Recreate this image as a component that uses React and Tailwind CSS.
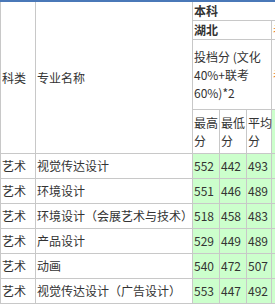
const rows = [
  ['艺术', '视觉传达设计', 552, 442, 493],
  ['艺术', '环境设计', 551, 446, 489],
  ['艺术', '环境设计（会展艺术与技术）', 518, 458, 483],
  ['艺术', '产品设计', 529, 449, 489],
  ['艺术', '动画', 540, 472, 507],
  ['艺术', '视觉传达设计（广告设计）', 553, 447, 492],
];

const cell = 'border border-[#c8c8c8] px-px py-0 align-middle text-left';

export default function App() {
  return (
    <div className="w-[275px] h-[305px] overflow-hidden bg-white">
      <table
        className="w-[331px] table-fixed border-collapse border-t-2 border-t-[#4a78b8] text-[12px] leading-[18px] text-[#333]"
        style={{ fontFamily: '"Microsoft YaHei", "Noto Sans CJK SC", sans-serif' }}
      >
        <colgroup>
          <col className="w-[35px]" />
          <col className="w-[157px]" />
          <col className="w-[27px]" />
          <col className="w-[27px]" />
          <col className="w-[25px]" />
          <col className="w-[60px]" />
        </colgroup>
        <thead>
          <tr className="h-[19px]">
            <th rowSpan={4} className={cell + ' font-normal whitespace-nowrap'}>科类</th>
            <th rowSpan={4} className={cell + ' font-normal whitespace-nowrap'}>专业名称</th>
            <th colSpan={4} className={cell + ' font-bold'}>本科</th>
          </tr>
          <tr className="h-[17px]">
            <th colSpan={3} className={cell + ' font-bold'}>湖北</th>
            <th className={cell + ' font-normal whitespace-nowrap text-[#e8741c]'}>考试</th>
          </tr>
          <tr className="h-[70px]">
            <th colSpan={3} className={cell + ' font-normal'}>投档分 (文化40%+联考60%)*2</th>
            <th className={cell + ' font-normal whitespace-nowrap text-[#e8741c]'}>考试</th>
          </tr>
          <tr className="h-[44px]">
            <th className={cell + ' font-normal whitespace-nowrap'}>最高<br />分</th>
            <th className={cell + ' font-normal whitespace-nowrap'}>最低<br />分</th>
            <th className={cell + ' font-normal whitespace-nowrap'}>平均<br />分</th>
            <th className={cell + ' font-normal bg-[#ccffcc] whitespace-nowrap'}>&nbsp;</th>
          </tr>
        </thead>
        <tbody>
          {rows.map((r, i) => (
            <tr key={i} className="h-[25px]">
              <td className={cell}>{r[0]}</td>
              <td className={cell + ' whitespace-nowrap'}>{r[1]}</td>
              <td className={cell + ' bg-[#ccffcc]'}>{r[2]}</td>
              <td className={cell + ' bg-[#ccffcc]'}>{r[3]}</td>
              <td className={cell + ' bg-[#ccffcc]'}>{r[4]}</td>
              <td className={cell + ' bg-[#ccffcc]'}>&nbsp;</td>
            </tr>
          ))}
        </tbody>
      </table>
    </div>
  );
}
